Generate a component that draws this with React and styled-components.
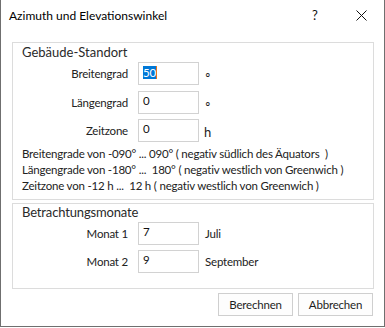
import React from "react";
import styled, { createGlobalStyle } from "styled-components";

const Global = createGlobalStyle`
  html, body { margin: 0; padding: 0; background: #fff; }
  body { font-family: Lato, "Noto Sans", sans-serif; }
`;

const Window = styled.div`
  box-sizing: border-box;
  width: 385px;
  height: 327px;
  background: #fff;
  border: 1px solid #6f6f6f;
  border-top: none;
  display: flex;
  flex-direction: column;
  color: #1e1e1e;
  font-size: 11.5px;
  letter-spacing: -0.2px;
`;

const TitleBar = styled.div`
  height: 30px;
  display: flex;
  align-items: center;
  padding-left: 8px;
`;

const Title = styled.div`
  flex: 1;
  font-size: 12px;
  letter-spacing: 0;
  color: #000;
`;

const TitleButton = styled.div`
  width: 46px;
  height: 30px;
  display: flex;
  align-items: center;
  justify-content: center;
  font-size: 13px;
  letter-spacing: 0;
  color: #111;
`;

const Body = styled.div`
  flex: 1;
  display: flex;
  flex-direction: column;
  padding: 12px 10px 0 11px;
`;

const Group = styled.div`
  border: 1px solid #dcdcdc;
  display: flex;
  flex-direction: column;
  margin-top: ${(p) => p.$mt || 0}px;
  padding: ${(p) => p.$pt}px 0 ${(p) => p.$pb}px 9px;
`;

const Legend = styled.div`
  font-size: 13px;
  line-height: 16px;
  height: 16px;
  color: #2a2a2a;
  letter-spacing: ${(p) => p.$ls || 0}px;
`;

const Row = styled.div`
  display: flex;
  align-items: center;
  height: 23px;
  margin-top: ${(p) => p.$mt || 0}px;
`;

const Label = styled.div`
  box-sizing: border-box;
  width: 125px;
  margin-left: -9px;
  padding-right: 10px;
  text-align: right;
  color: #222;
`;

const Field = styled.div`
  box-sizing: border-box;
  width: 61px;
  height: 23px;
  border: 1px solid #d2d2d2;
  padding: 2px 0 0 4px;
  line-height: 14px;
  color: #111;
`;

const Selected = styled.span`
  display: inline-block;
  line-height: 13px;
  margin-top: 1px;
  background: #0078d7;
  color: #fff;
  border-right: 1px solid #e8741c;
`;

const Unit = styled.div`
  margin-left: ${(p) => p.$ml || 6}px;
  padding-top: ${(p) => p.$pt || 0}px;
  color: #222;
  font-size: ${(p) => p.$fs || 11.5}px;
`;

const Info = styled.div`
  margin-top: 4px;
  display: flex;
  flex-direction: column;
`;

const InfoLine = styled.div`
  line-height: 16px;
  height: 16px;
  color: #222;
  white-space: pre;
`;

const Buttons = styled.div`
  display: flex;
  justify-content: flex-end;
  gap: 5px;
  margin-top: 4px;
  padding-right: 1px;
`;

const Button = styled.div`
  box-sizing: border-box;
  width: 75px;
  height: 23px;
  border: 1px solid #cfcfcf;
  background: #fdfdfd;
  display: flex;
  align-items: center;
  justify-content: center;
  color: #1e1e1e;
`;

const CloseIcon = () => (
  <svg width="11" height="11" viewBox="0 0 11 11">
    <path d="M0.5 0.5 L10.5 10.5 M10.5 0.5 L0.5 10.5" stroke="#111" strokeWidth="1" fill="none" />
  </svg>
);

export default function App() {
  return (
    <>
      <Global />
      <Window>
        <TitleBar>
          <Title>Azimuth und Elevationswinkel</Title>
          <TitleButton>?</TitleButton>
          <TitleButton>
            <CloseIcon />
          </TitleButton>
        </TitleBar>
        <Body>
          <Group $pt={1} $pb={5}>
            <Legend>Gebäude-Standort</Legend>
            <Row $mt={2}>
              <Label>Breitengrad</Label>
              <Field>
                <Selected>50</Selected>
              </Field>
              <Unit $ml={5} $pt={1} $fs={12}>∘</Unit>
            </Row>
            <Row $mt={6}>
              <Label>Längengrad</Label>
              <Field>0</Field>
              <Unit $ml={5} $pt={1} $fs={12}>∘</Unit>
            </Row>
            <Row $mt={5}>
              <Label>Zeitzone</Label>
              <Field>0</Field>
              <Unit $ml={5} $pt={3} $fs={13}>h</Unit>
            </Row>
            <Info>
              <InfoLine>Breitengrade von -090° ... 090° ( negativ südlich des Äquators  )</InfoLine>
              <InfoLine>Längengrade von -180° ...  180° ( negativ westlich von Greenwich )</InfoLine>
              <InfoLine>Zeitzone von -12 h ...  12 h ( negativ westlich von Greenwich )</InfoLine>
            </Info>
          </Group>
          <Group $mt={3} $pt={0} $pb={15}>
            <Legend $ls={-0.15}>Betrachtungsmonate</Legend>
            <Row $mt={2}>
              <Label>Monat 1</Label>
              <Field>7</Field>
              <Unit $ml={6}>Juli</Unit>
            </Row>
            <Row $mt={5}>
              <Label>Monat 2</Label>
              <Field>9</Field>
              <Unit $ml={6}>September</Unit>
            </Row>
          </Group>
          <Buttons>
            <Button>Berechnen</Button>
            <Button>Abbrechen</Button>
          </Buttons>
        </Body>
      </Window>
    </>
  );
}
